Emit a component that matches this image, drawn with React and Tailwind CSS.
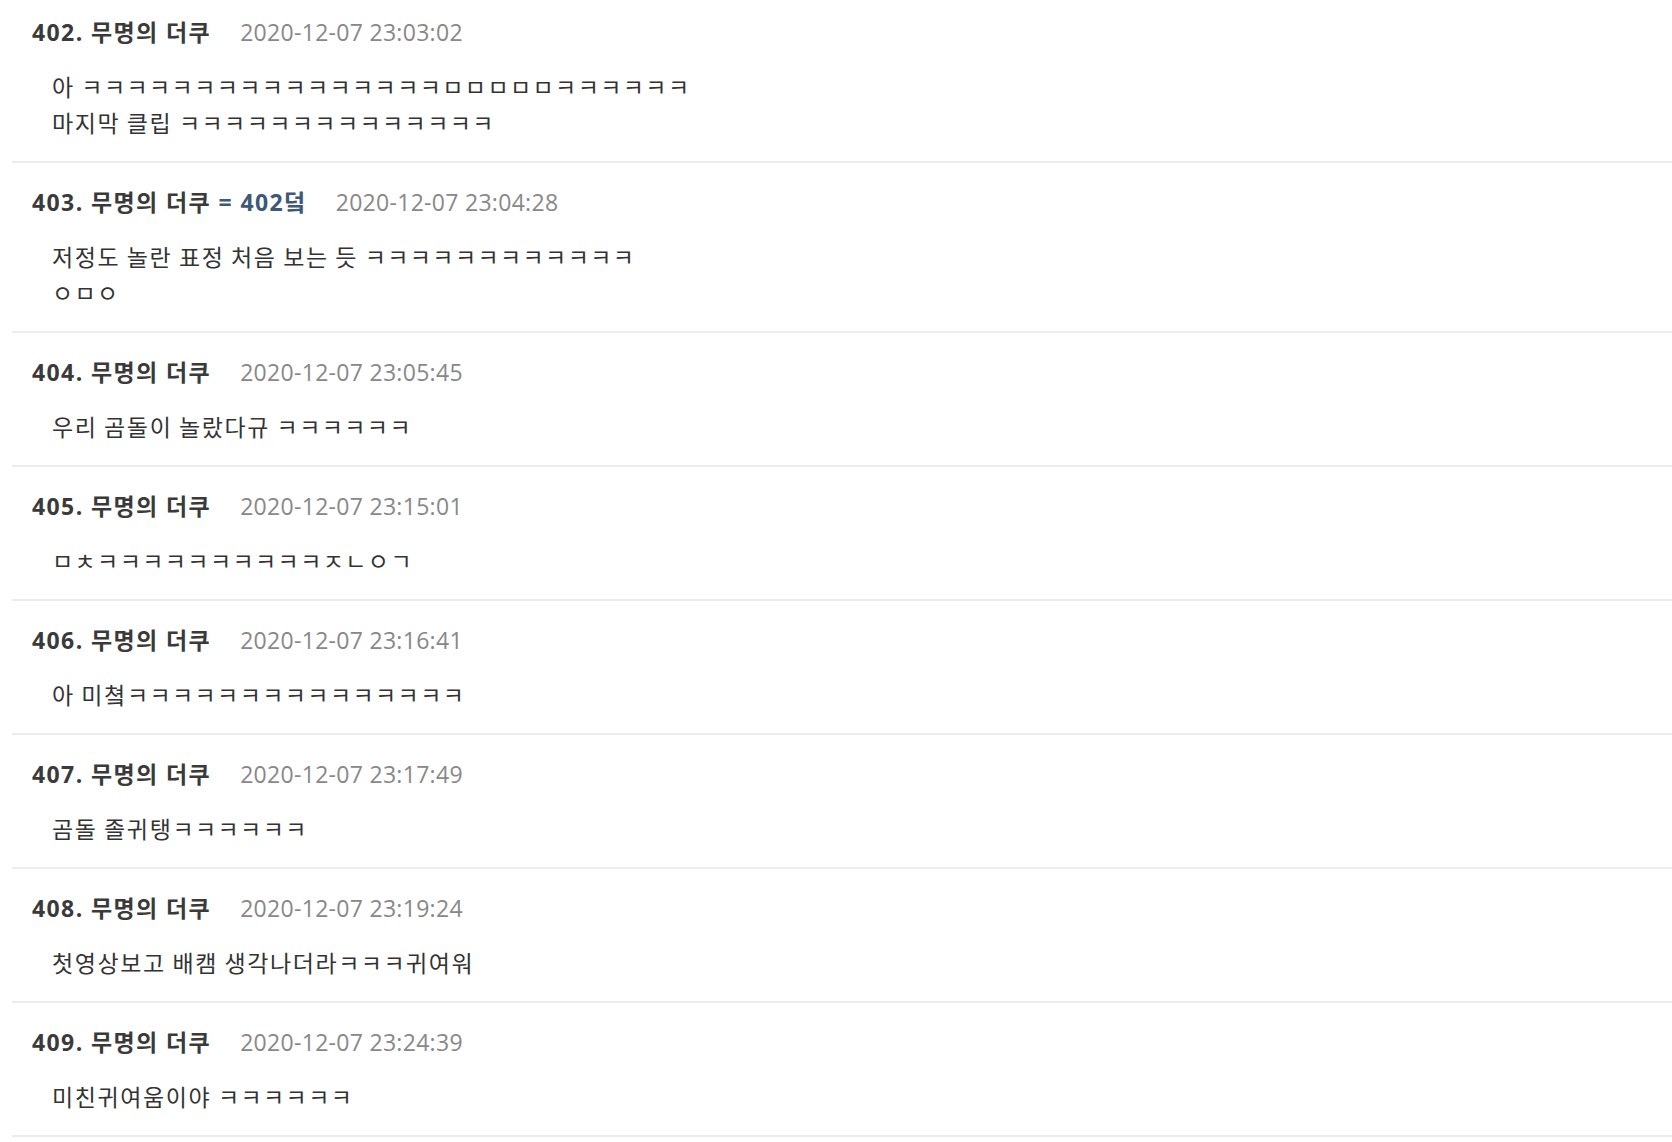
import React from "react";

const rows = [
  {
    n: "402",
    ref: null,
    time: "2020-12-07 23:03:02",
    lines: [
      "아 " + "ㅋ".repeat(16) + "ㅁ".repeat(5) + "ㅋ".repeat(6),
      "마지막 클립 " + "ㅋ".repeat(14),
    ],
  },
  {
    n: "403",
    ref: "= 402덬",
    time: "2020-12-07 23:04:28",
    lines: ["저정도 놀란 표정 처음 보는 듯 " + "ㅋ".repeat(12), "ㅇㅁㅇ"],
  },
  {
    n: "404",
    ref: null,
    time: "2020-12-07 23:05:45",
    lines: ["우리 곰돌이 놀랐다규 " + "ㅋ".repeat(6)],
  },
  {
    n: "405",
    ref: null,
    time: "2020-12-07 23:15:01",
    lines: ["ㅁㅊ" + "ㅋ".repeat(10) + "ㅈㄴㅇㄱ"],
  },
  {
    n: "406",
    ref: null,
    time: "2020-12-07 23:16:41",
    lines: ["아 미쳨" + "ㅋ".repeat(15)],
  },
  {
    n: "407",
    ref: null,
    time: "2020-12-07 23:17:49",
    lines: ["곰돌 졸귀탱" + "ㅋ".repeat(6)],
  },
  {
    n: "408",
    ref: null,
    time: "2020-12-07 23:19:24",
    lines: ["첫영상보고 배캠 생각나더라ㅋㅋㅋ귀여워"],
  },
  {
    n: "409",
    ref: null,
    time: "2020-12-07 23:24:39",
    lines: ["미친귀여움이야 " + "ㅋ".repeat(6)],
  },
];

function Body({ text }) {
  const parts = text.split(/([ㄱ-ㅎㅏ-ㅣ]+| +)/).filter((p) => p !== "");
  return (
    <div className="whitespace-pre">
      {parts.map((p, k) => {
        if (/^[ㄱ-ㅎㅏ-ㅣ]+$/.test(p))
          return (
            <span key={k} className="tracking-[1.4px]">
              {p}
            </span>
          );
        if (/^ +$/.test(p))
          return (
            <span key={k} className="tracking-[0.6px]">
              {p}
            </span>
          );
        return (
          <span key={k} className="tracking-[1.6px]">
            {p}
          </span>
        );
      })}
    </div>
  );
}

export default function App() {
  return (
    <div
      className="min-h-screen bg-white"
      style={{ fontFamily: '"Open Sans", "Noto Sans CJK KR", sans-serif' }}
    >
      <div className="ml-[12px]">
        {rows.map((r, i) => (
          <div
            key={r.n}
            className={
              "border-b-2 border-[#ececec] pb-[20px] " +
              (i === 0 ? "pt-[14px]" : "pt-[21px]")
            }
          >
            <div className="flex items-center h-[36px] pl-[20px] text-[23px] leading-[36px]">
              <span className="font-bold text-[#3a3a3a] tracking-[1.4px]">
                {r.n}. 무명의 더쿠
                {r.ref && <span className="text-[#3d5878]"> {r.ref}</span>}
              </span>
              <span className="ml-[29px] text-[#888888] tracking-[0.3px]">
                {r.time}
              </span>
            </div>
            <div className="mt-[19px] pl-[40px] text-[23px] leading-[36px] text-[#333333]">
              {r.lines.map((l, j) => (
                <Body key={j} text={l} />
              ))}
            </div>
          </div>
        ))}
      </div>
    </div>
  );
}
